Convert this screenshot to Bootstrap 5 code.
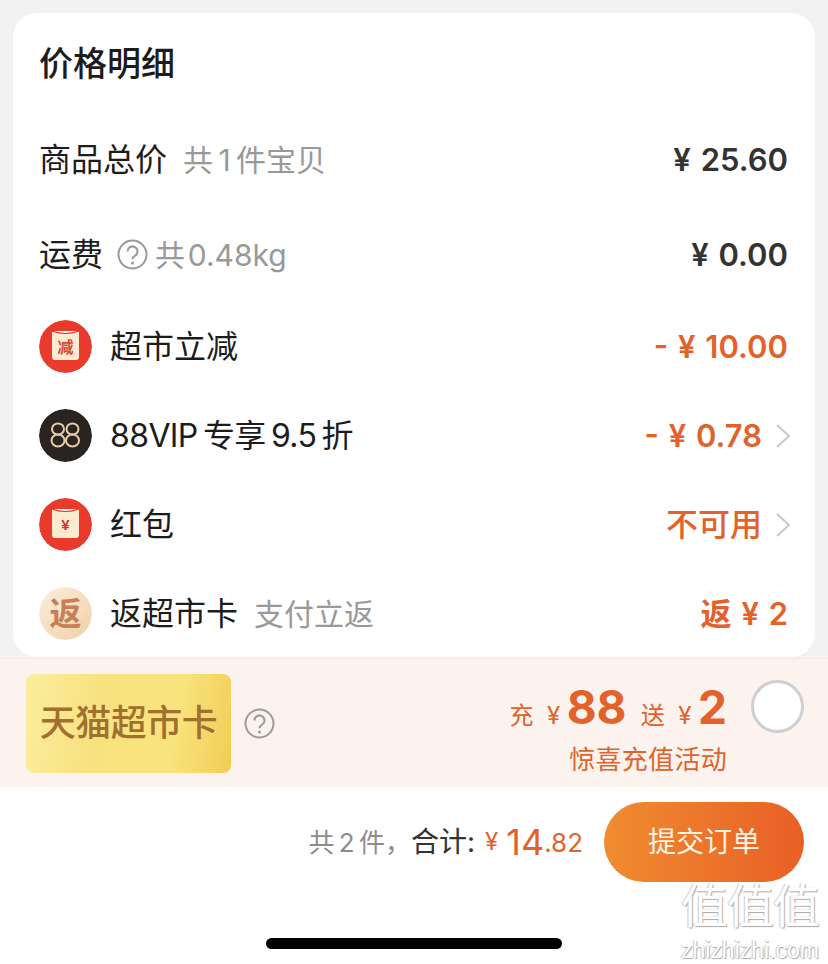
<!DOCTYPE html>
<html lang="zh">
<head>
<meta charset="utf-8">
<title>价格明细</title>
<link rel="stylesheet" href="https://cdn.jsdelivr.net/npm/bootstrap@5.3.0/dist/css/bootstrap.min.css">
<style>
html,body{height:964px;overflow:hidden}
body{background:#f2f2f2;font-family:"Inter","Noto Sans CJK SC",sans-serif;color:#1c1c1c}
.sheet{width:828px;height:964px;padding-top:13px}
.panel{margin:0 13px;height:644px;background:#fff;border-radius:24px;padding:0 27px 0 26px}
.head{height:99px;font-size:34px;font-weight:500;line-height:99px;padding-top:1px}
.rw{font-size:32px;line-height:40px}
.rw-a{height:95px}
.rw-b{height:89px}
.note{color:#999;font-size:30px;font-weight:400}
.amt{font-weight:600;font-size:31px;color:#333;word-spacing:2px}
.cjk{font-weight:500;font-size:32px}
.org{color:#e2622c}
.ava{width:53px;height:53px;border-radius:50%;flex:none;margin-right:18px}
.qmark{flex:none}
.q-top{margin-top:34px;margin-left:13px}
.q-mid{margin-left:14px;margin-right:7px}
.chev{flex:none;margin-left:13px;margin-right:-3px}
.vip{letter-spacing:-.6px}
.band{height:128px;margin-top:2px;background:#fcf2ee;box-shadow:0 -1px 0 #f5e9e4;padding:15px 24px 0 26px}
.gold{width:205px;height:99px;border-radius:8px;background:linear-gradient(100deg,#fbeea0 0%,#f8e27f 35%,#f8e47e 70%,#f2cd55 100%);color:#a0702e;font-size:36px;font-weight:500;line-height:99px;text-align:center;letter-spacing:-.5px;flex:none}
.offer{color:#e2622c;line-height:1;padding-top:10px}
.offer-sm{font-size:24px;margin-left:3px}
.offer-big{font-size:46px;font-weight:700;margin-left:2px}
.offer-cap{font-size:26px;margin-top:17px;letter-spacing:.3px}
.circ{width:53px;height:53px;border-radius:50%;background:#fff;border:3px solid #cfcfcf;flex:none;margin-left:24px;margin-top:6px}
.foot{height:177px;background:#fff;position:relative;padding:15px 24px 0 0}
.sum-row{height:80px}
.tot-a{color:#8c8c8c;font-size:26px;word-spacing:-3px}
.tot-b{color:#333;font-size:28px;margin-right:10px}
.tot-c{color:#e2622c;font-size:24px;margin-right:8px}
.tot-d{color:#e2622c;font-size:36px}
.tot-e{color:#e2622c;font-size:26px}
.go{width:200px;height:80px;border:0;border-radius:40px;background:linear-gradient(90deg,#f08c30,#e85f26);color:#fff3e6;font-size:28px;margin-left:21px;padding:0}
.bar{position:absolute;left:266px;top:151px;width:296px;height:11px;border-radius:6px;background:#000}
.wm{position:absolute;left:675px;top:92px;width:150px;text-align:center;color:#fff;text-shadow:1px 1px 1px #a8a8a8,-1px 0 1px #c8c8c8;font-family:"Noto Sans CJK SC",sans-serif;line-height:1}
.wm-a{font-size:47px;letter-spacing:-1px;white-space:nowrap}
.wm-b{font-size:23px;font-family:"Liberation Sans",sans-serif;margin-top:13px;white-space:nowrap}
</style>
</head>
<body>
<div class="sheet">
  <div class="panel">
    <div class="head">价格明细</div>
    <div class="rw rw-a d-flex align-items-center justify-content-between">
      <div class="d-flex align-items-center"><span>商品总价</span><span class="note ms-3">共&#8201;1&#8201;件宝贝</span></div>
      <div class="amt">¥ 25.60</div>
    </div>
    <div class="rw rw-a d-flex align-items-center justify-content-between">
      <div class="d-flex align-items-center"><span>运费</span>
        <svg class="qmark q-mid" width="31" height="31" viewBox="0 0 31 31"><circle cx="15.5" cy="15.5" r="14" fill="none" stroke="#999" stroke-width="2"/><path d="M10.5 12.5a5 5 0 1 1 7.6 4.2c-1.7 1-2.6 1.9-2.6 3.6" fill="none" stroke="#999" stroke-width="2"/><circle cx="15.5" cy="24" r="1.5" fill="#999"/></svg>
        <span class="note">共&#8202;0.48kg</span></div>
      <div class="amt">¥ 0.00</div>
    </div>
    <div class="rw rw-b d-flex align-items-center justify-content-between">
      <div class="d-flex align-items-center">
        <svg class="ava" viewBox="0 0 53 53"><circle cx="26.5" cy="26.5" r="26.5" fill="#ea3a2c"/><path d="M13 11h27v26a3 3 0 0 1-3 3H16a3 3 0 0 1-3-3z" fill="#fcebd0"/><path d="M13 11q13 5 27 0" fill="#fff" stroke="#d8342a" stroke-width="1.2"/><text x="26.5" y="33" text-anchor="middle" font-size="16" font-weight="700" fill="#d8483a" font-family="Noto Sans CJK SC">减</text></svg>
        <span>超市立减</span></div>
      <div class="amt org">- ¥ 10.00</div>
    </div>
    <div class="rw rw-b d-flex align-items-center justify-content-between">
      <div class="d-flex align-items-center">
        <svg class="ava" viewBox="0 0 53 53"><circle cx="26.5" cy="26.5" r="26.5" fill="#2a2421"/><g fill="none" stroke="#e6cda6" stroke-width="2"><ellipse cx="19" cy="20" rx="6" ry="5.5"/><ellipse cx="19" cy="31.5" rx="6.5" ry="6"/><ellipse cx="33.5" cy="20" rx="6" ry="5.5"/><ellipse cx="33.5" cy="31.5" rx="6.5" ry="6"/></g></svg>
        <span class="vip">88VIP&#8201;专享&#8201;9.5&#8201;折</span></div>
      <div class="d-flex align-items-center"><span class="amt org">- ¥ 0.78</span>
        <svg class="chev" width="16" height="26" viewBox="0 0 16 26"><path d="M2 2l12 11L2 24" fill="none" stroke="#c8c8c8" stroke-width="2"/></svg></div>
    </div>
    <div class="rw rw-b d-flex align-items-center justify-content-between">
      <div class="d-flex align-items-center">
        <svg class="ava" viewBox="0 0 53 53"><circle cx="26.5" cy="26.5" r="26.5" fill="#ea3a2c"/><path d="M13 11h27v26a3 3 0 0 1-3 3H16a3 3 0 0 1-3-3z" fill="#fcebd0"/><path d="M13 11q13 5 27 0" fill="#fff" stroke="#d8342a" stroke-width="1.2"/><text x="26.5" y="32" text-anchor="middle" font-size="15" font-weight="700" fill="#d8342a" font-family="Liberation Sans">¥</text></svg>
        <span>红包</span></div>
      <div class="d-flex align-items-center"><span class="cjk org">不可用</span>
        <svg class="chev" width="16" height="26" viewBox="0 0 16 26"><path d="M2 2l12 11L2 24" fill="none" stroke="#c8c8c8" stroke-width="2"/></svg></div>
    </div>
    <div class="rw rw-b d-flex align-items-center justify-content-between">
      <div class="d-flex align-items-center">
        <svg class="ava" viewBox="0 0 53 53"><defs><linearGradient id="fa" x1="0" y1="0" x2="1" y2="1"><stop offset="0" stop-color="#fbeedd"/><stop offset="1" stop-color="#f0d0a8"/></linearGradient></defs><circle cx="26.5" cy="26.5" r="26.5" fill="url(#fa)"/><text x="26.5" y="38" text-anchor="middle" font-size="32" font-weight="700" fill="#c77f55" font-family="Noto Sans CJK SC">返</text></svg>
        <span>返超市卡</span><span class="note ms-3">支付立返</span></div>
      <div class="amt org">返 ¥ 2</div>
    </div>
  </div>
  <div class="band d-flex">
    <div class="gold">天猫超市卡</div>
    <svg class="qmark q-top" width="31" height="31" viewBox="0 0 31 31"><circle cx="15.5" cy="15.5" r="14" fill="none" stroke="#a09a98" stroke-width="2"/><path d="M10.5 12.5a5 5 0 1 1 7.6 4.2c-1.7 1-2.6 1.9-2.6 3.6" fill="none" stroke="#a09a98" stroke-width="2"/><circle cx="15.5" cy="24" r="1.5" fill="#a09a98"/></svg>
    <div class="ms-auto d-flex">
      <div class="offer text-end">
        <div><span class="offer-sm">充 &nbsp;¥</span> <span class="offer-big">88</span> <span class="offer-sm">&nbsp;送 &nbsp;¥</span> <span class="offer-big">2</span></div>
        <div class="offer-cap">惊喜充值活动</div>
      </div>
      <div class="circ"></div>
    </div>
  </div>
  <div class="foot d-flex justify-content-end align-items-start">
    <div class="sum-row d-flex align-items-center">
      <span class="tot-a">共 2 件，</span><span class="tot-b">合计:</span><span class="tot-c">¥</span><span class="tot-d">14</span><span class="tot-e">.82</span>
      <button class="go btn" type="button">提交订单</button>
    </div>
    <div class="bar"></div>
    <div class="wm"><div class="wm-a">值值值</div><div class="wm-b">zhizhizhi.com</div></div>
  </div>
</div>
</body>
</html>
